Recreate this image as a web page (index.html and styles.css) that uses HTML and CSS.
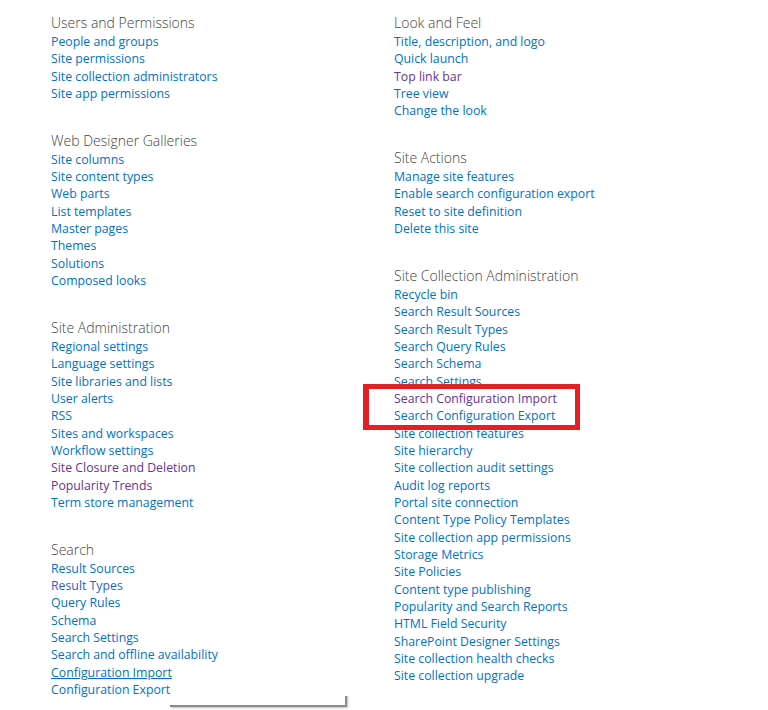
FILE: index.html
```html
<!DOCTYPE html>
<html lang="en">
<head>
<meta charset="utf-8">
<title>Site Settings</title>
<link rel="stylesheet" href="styles.css">
</head>
<body>
<div class="page">
  <div class="column">
    <section class="group">
      <h3 class="title">Users and Permissions</h3>
      <ul class="links">
        <li><a href="#">People and groups</a></li>
        <li><a href="#">Site permissions</a></li>
        <li><a href="#">Site collection administrators</a></li>
        <li><a href="#">Site app permissions</a></li>
      </ul>
    </section>
    <section class="group">
      <h3 class="title">Web Designer Galleries</h3>
      <ul class="links">
        <li><a href="#">Site columns</a></li>
        <li><a href="#">Site content types</a></li>
        <li><a href="#">Web parts</a></li>
        <li><a href="#">List templates</a></li>
        <li><a href="#">Master pages</a></li>
        <li><a href="#">Themes</a></li>
        <li><a href="#">Solutions</a></li>
        <li><a href="#">Composed looks</a></li>
      </ul>
    </section>
    <section class="group">
      <h3 class="title">Site Administration</h3>
      <ul class="links">
        <li><a href="#">Regional settings</a></li>
        <li><a href="#">Language settings</a></li>
        <li><a href="#">Site libraries and lists</a></li>
        <li><a href="#">User alerts</a></li>
        <li><a href="#">RSS</a></li>
        <li><a href="#">Sites and workspaces</a></li>
        <li><a href="#">Workflow settings</a></li>
        <li><a href="#" class="visited">Site Closure and Deletion</a></li>
        <li><a href="#" class="visited">Popularity Trends</a></li>
        <li><a href="#">Term store management</a></li>
      </ul>
    </section>
    <section class="group">
      <h3 class="title">Search</h3>
      <ul class="links">
        <li><a href="#">Result Sources</a></li>
        <li><a href="#" class="semi">Result Types</a></li>
        <li><a href="#">Query Rules</a></li>
        <li><a href="#">Schema</a></li>
        <li><a href="#">Search Settings</a></li>
        <li><a href="#">Search and offline availability</a></li>
        <li><a href="#" class="hover">Configuration Import</a></li>
        <li><a href="#">Configuration Export</a></li>
      </ul>
    </section>
  </div>
  <div class="column">
    <section class="group">
      <h3 class="title">Look and Feel</h3>
      <ul class="links">
        <li><a href="#">Title, description, and logo</a></li>
        <li><a href="#">Quick launch</a></li>
        <li><a href="#" class="visited">Top link bar</a></li>
        <li><a href="#">Tree view</a></li>
        <li><a href="#">Change the look</a></li>
      </ul>
    </section>
    <section class="group">
      <h3 class="title">Site Actions</h3>
      <ul class="links">
        <li><a href="#">Manage site features</a></li>
        <li><a href="#">Enable search configuration export</a></li>
        <li><a href="#">Reset to site definition</a></li>
        <li><a href="#">Delete this site</a></li>
      </ul>
    </section>
    <section class="group">
      <h3 class="title">Site Collection Administration</h3>
      <ul class="links">
        <li><a href="#">Recycle bin</a></li>
        <li><a href="#">Search Result Sources</a></li>
        <li><a href="#">Search Result Types</a></li>
        <li><a href="#">Search Query Rules</a></li>
        <li><a href="#">Search Schema</a></li>
        <li><a href="#">Search Settings</a></li>
        <li><a href="#" class="visited">Search Configuration Import</a></li>
        <li><a href="#">Search Configuration Export</a></li>
        <li><a href="#">Site collection features</a></li>
        <li><a href="#">Site hierarchy</a></li>
        <li><a href="#">Site collection audit settings</a></li>
        <li><a href="#">Audit log reports</a></li>
        <li><a href="#">Portal site connection</a></li>
        <li><a href="#">Content Type Policy Templates</a></li>
        <li><a href="#">Site collection app permissions</a></li>
        <li><a href="#">Storage Metrics</a></li>
        <li><a href="#">Site Policies</a></li>
        <li><a href="#">Content type publishing</a></li>
        <li><a href="#">Popularity and Search Reports</a></li>
        <li><a href="#">HTML Field Security</a></li>
        <li><a href="#">SharePoint Designer Settings</a></li>
        <li><a href="#">Site collection health checks</a></li>
        <li><a href="#">Site collection upgrade</a></li>
      </ul>
    </section>
  </div>
  <div class="highlight"></div>
  <div class="shadow-edge"></div>
</div>
</body>
</html>
```

FILE: styles.css
```css
html, body {
  margin: 0;
  padding: 0;
  background: #ffffff;
}

.page {
  position: relative;
  display: grid;
  grid-template-columns: 343px 1fr;
  padding: 12px 0 0 51px;
  width: 768px;
  height: 710px;
  box-sizing: border-box;
  overflow: hidden;
  font-family: "Open Sans", "Noto Sans", sans-serif;
}

.column {
  display: flex;
  flex-direction: column;
  gap: 27.5px;
}

.title {
  margin: 0;
  font-size: 14px;
  font-weight: 300;
  line-height: 21px;
  height: 21px;
  color: #444444;
  white-space: nowrap;
}

.links {
  list-style: none;
  margin: 0;
  padding: 0;
}

.links li {
  font-size: 12.3px;
  line-height: 17.33px;
  height: 17.33px;
  white-space: nowrap;
}

.links a {
  color: #0072c6;
  text-decoration: none;
}

.links a.visited {
  color: #663399;
}

.links a.semi {
  color: #2d5fc0;
}

.links a.hover {
  text-decoration: underline;
}

.highlight {
  position: absolute;
  left: 363px;
  top: 384px;
  width: 217px;
  height: 46px;
  box-sizing: border-box;
  border: 5px solid #e81e25;
  border-left-width: 6px;
}

.shadow-edge {
  position: absolute;
  left: 170px;
  top: 690px;
  width: 177px;
  height: 17px;
  box-sizing: border-box;
  border-right: 2px solid #8c8c8c;
  border-bottom: 2px solid #8c8c8c;
  box-shadow: 1px 1px 2px rgba(0, 0, 0, 0.25);
  clip-path: inset(6px -4px -4px 0);
}
```
